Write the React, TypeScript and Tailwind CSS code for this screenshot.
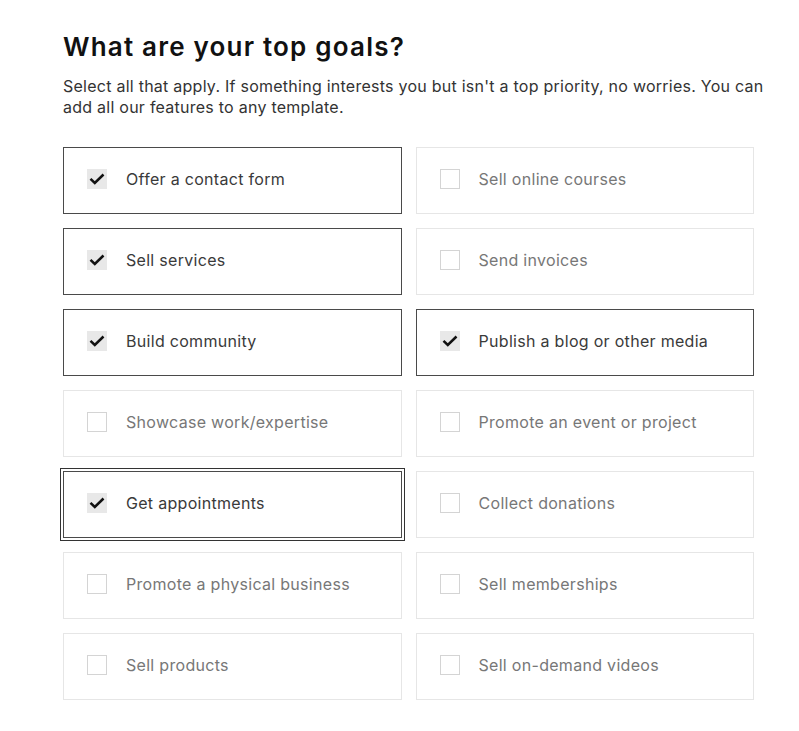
import { useState } from "react"

const goals = [
    { label: "Offer a contact form", checked: true },
    { label: "Sell online courses", checked: false },
    { label: "Sell services", checked: true },
    { label: "Send invoices", checked: false },
    { label: "Build community", checked: true },
    { label: "Publish a blog or other media", checked: true },
    { label: "Showcase work/expertise", checked: false },
    { label: "Promote an event or project", checked: false },
    { label: "Get appointments", checked: true, focused: true },
    { label: "Collect donations", checked: false },
    { label: "Promote a physical business", checked: false },
    { label: "Sell memberships", checked: false },
    { label: "Sell products", checked: false },
    { label: "Sell on-demand videos", checked: false },
]

const App = () => {
    const [selected, setSelected] = useState(goals.map((g) => g.checked))

    const toggle = (i: number) => {
        setSelected((prev) => prev.map((v, j) => (j === i ? !v : v)))
    }

    return (
        <div className="min-h-[731px] bg-white font-['Inter',sans-serif] text-[#111]">
            <div className="w-[775px] pl-[63px] pt-[30px]">
                <h1 className="text-[26px] font-semibold leading-[34px] tracking-[1.2px]">What are your top goals?</h1>
                <p className="mt-[12px] text-[16px] leading-[21px] tracking-[0.25px] text-[#333]">
                    Select all that apply. If something interests you but isn't a top priority, no worries. You can add all our features to any template.
                </p>
                <div className="mt-[29px] grid w-[691px] grid-cols-2 gap-x-[14px] gap-y-[14px]">
                    {goals.map((g, i) => {
                        const on = selected[i]
                        return (
                            <button
                                key={g.label}
                                type="button"
                                onClick={() => toggle(i)}
                                className={`flex h-[67px] items-center gap-[19px] border pb-[3px] pl-[23px] text-left ${on ? "border-[#4a4a4a]" : "border-[#e6e6e6]"} ${g.focused ? "outline outline-1 outline-offset-[2px] outline-[#333]" : ""}`}
                            >
                                <span className={`flex h-[20px] w-[20px] shrink-0 items-center justify-center ${on ? "bg-[#e8e8e8]" : "border border-[#d4d4d4] bg-white"}`}>
                                    {on && (
                                        <svg width="16" height="12" viewBox="0 0 16 12" fill="none">
                                            <path d="M1.5 5.8 L5.8 10 L14.5 1.5" stroke="#111" strokeWidth="2.5" />
                                        </svg>
                                    )}
                                </span>
                                <span className={`text-[16px] tracking-[0.3px] ${on ? "text-[#3a3a3a]" : "text-[#777]"}`}>{g.label}</span>
                            </button>
                        )
                    })}
                </div>
            </div>
        </div>
    )
}

export default App
